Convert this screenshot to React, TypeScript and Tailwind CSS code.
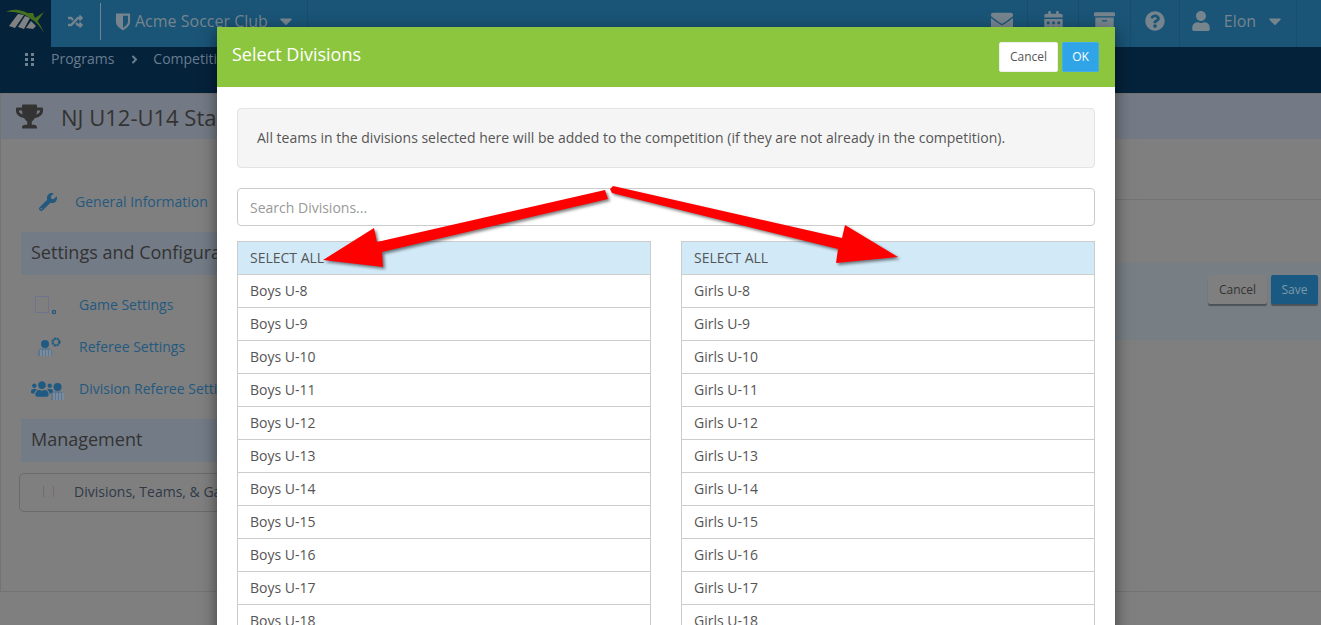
import {
  FaArchive,
  FaAngleRight,
  FaCalendarAlt,
  FaCaretDown,
  FaEnvelope,
  FaQuestionCircle,
  FaRandom,
  FaTrophy,
  FaUser,
  FaUsers,
  FaWrench,
} from "react-icons/fa";

const ages = ["U-8", "U-9", "U-10", "U-11", "U-12", "U-13", "U-14", "U-15", "U-16", "U-17", "U-18"];

function Logo() {
  return (
    <svg viewBox="0 0 51 47" className="h-[47px] w-[51px]">
      <path d="M6 12 C18 5 38 14 44 33 C37 20 22 10 6 12 Z" fill="#44701f" />
      <polygon points="9,26 18,14 24,15 15,28" fill="#808182" />
      <polygon points="18,27 25,16 30,18 24,29" fill="#808182" />
      <polygon points="26,28 31,21 36,26 33,29" fill="#808182" />
      <polygon points="28,13 33,13 35,18 44,12 37,22 31,19" fill="#44701f" />
    </svg>
  );
}

function ShieldIcon() {
  return (
    <svg viewBox="0 0 17 20" className="h-[19px] w-4">
      <path d="M1 1.5 H16 V10 C16 15 12 17 8.5 19.5 C5 17 1 15 1 10 Z" fill="#76848e" />
      <path d="M8.5 4 H13.8 V10 C13.8 13 11 15 8.5 16.8 Z" fill="#1a5476" />
    </svg>
  );
}

function GridDots() {
  return (
    <div className="grid grid-cols-2 gap-x-[3px] gap-y-[2px]">
      {[0, 1, 2, 3, 4, 5].map((i) => (
        <span key={i} className="h-[3px] w-[3px] bg-[#71828f]" />
      ))}
    </div>
  );
}

function GameIcon() {
  return (
    <svg viewBox="0 0 24 20" className="h-5 w-6">
      <rect x="1.5" y="1.5" width="13" height="16" fill="none" stroke="#6f7390" strokeWidth="1" />
      <circle cx="20" cy="17" r="1.6" fill="none" stroke="#24597f" strokeWidth="1.4" />
    </svg>
  );
}

function RefereeIcon() {
  return (
    <svg viewBox="0 0 26 20" className="h-5 w-[26px]">
      <circle cx="9" cy="7" r="4" fill="#1f5a82" />
      <path d="M2 19 V15 C2 12 5 11 9 11 C13 11 16 12 16 15 V19 Z" fill="#5d7690" />
      <path d="M5 13 V19 M8 13 V19 M11 13 V19 M14 13 V19" stroke="#a8aeb4" strokeWidth="0.8" />
      <circle cx="20" cy="5" r="3.4" fill="none" stroke="#1f5a82" strokeWidth="2.4" strokeDasharray="2 0.7" />
    </svg>
  );
}

function DivisionRefereeIcon() {
  return (
    <div className="flex items-end">
      <FaUsers className="text-[22px] text-[#1f5a82]" />
      <svg viewBox="0 0 13 18" className="-ml-[2px] h-[18px] w-[13px]">
        <circle cx="6.5" cy="5" r="4" fill="#1f5a82" />
        <path d="M0 18 V13 C0 10 3 9 6.5 9 C10 9 13 10 13 13 V18 Z" fill="#5d7690" />
        <path d="M3 11 V18 M6 11 V18 M9 11 V18 M12 11 V18" stroke="#a8aeb4" strokeWidth="0.8" />
      </svg>
    </div>
  );
}

function TopCell({ children, width }: { children: React.ReactNode; width: string }) {
  return <div className={`flex h-full items-center justify-center border-r border-[#184c6c] pb-[5px] ${width}`}>{children}</div>;
}

function DivisionList({ group }: { group: string }) {
  return (
    <div className="border-x border-t border-[#ccc]">
      <div className="flex h-[33px] items-center border-b border-[#ccc] bg-[#d2e9f7] px-3 text-[#555]">SELECT ALL</div>
      {ages.map((age) => (
        <div key={age} className="flex h-[33px] items-center border-b border-[#ccc] px-3 text-[#555]">
          {group} {age}
        </div>
      ))}
    </div>
  );
}

export default function App() {
  return (
    <div className="relative h-[625px] overflow-hidden bg-[#7f7f7f] font-['Open_Sans',sans-serif] text-sm">
      {/* top bar */}
      <div className="flex h-[47px] bg-[#1a5476] text-[#76848e]">
        <div className="w-[51px] shrink-0 bg-[#05223b]">
          <Logo />
        </div>
        <div className="flex h-full w-[257px] items-center border-r border-[#184c6c] pb-[5px]">
          <div className="flex w-[49px] justify-center">
            <FaRandom className="text-[15px]" />
          </div>
          <div className="h-[37px] w-px bg-[#6e8593]" />
          <div className="ml-[14px]">
            <ShieldIcon />
          </div>
          <span className="ml-[4px] text-base">Acme Soccer Club</span>
          <FaCaretDown className="ml-[8px] text-[20px]" />
        </div>
        <div className="flex-1" />
        <div className="flex h-full pr-6">
          <TopCell width="w-[52px]">
            <FaEnvelope className="text-[22px]" />
          </TopCell>
          <TopCell width="w-[51px]">
            <FaCalendarAlt className="text-[21px]" />
          </TopCell>
          <TopCell width="w-[52px]">
            <FaArchive className="text-[21px]" />
          </TopCell>
          <TopCell width="w-[49px]">
            <FaQuestionCircle className="text-[20px]" />
          </TopCell>
          <TopCell width="w-[117px]">
            <FaUser className="text-[20px]" />
            <span className="ml-[13px] text-base">Elon</span>
            <FaCaretDown className="ml-[9px] text-[20px]" />
          </TopCell>
        </div>
      </div>

      {/* breadcrumb */}
      <div className="flex h-[46px] items-start bg-[#05223b] pl-[25px] pt-[2px] text-[#687d8f]">
        <div className="mt-[4px]">
          <GridDots />
        </div>
        <span className="ml-[17px]">Programs</span>
        <FaAngleRight className="ml-[14px] mt-[4px] text-[13px]" />
        <span className="ml-[12px]">Competitions</span>
      </div>

      {/* page title */}
      <div className="flex h-[46px] items-center border-l border-t border-[#737373] bg-[#747a85] pl-[15px] text-[#333]">
        <FaTrophy className="text-[27px]" />
        <span className="ml-[18px] mt-[2px] text-[22px]">NJ U12-U14 State Cup</span>
      </div>

      {/* page content */}
      <div className="flex h-[453px] border-b border-l border-[#737373]">
        <div className="w-[400px] shrink-0 pl-[18px] pt-[48px]">
          <div className="flex h-[30px] items-center pl-[20px] text-[#24597f]">
            <FaWrench className="text-[18px]" />
            <span className="ml-[18px]">General Information</span>
          </div>
          <div className="ml-[2px] mt-[15px] flex h-[43px] items-center bg-[#737b86] pb-[3px] pl-[10px] text-lg text-[#333]">
            Settings and Configuration
          </div>
          <div className="mt-[9px] flex h-[42px] items-center text-[#24597f]">
            <div className="flex w-[60px] justify-end pr-[21px]">
              <GameIcon />
            </div>
            <span>Game Settings</span>
          </div>
          <div className="flex h-[42px] items-center text-[#24597f]">
            <div className="flex w-[60px] justify-end pr-[17px]">
              <RefereeIcon />
            </div>
            <span>Referee Settings</span>
          </div>
          <div className="flex h-[42px] items-center text-[#24597f]">
            <div className="flex w-[60px] justify-end pr-[15px]">
              <DivisionRefereeIcon />
            </div>
            <span>Division Referee Settings</span>
          </div>
          <div className="ml-[2px] mt-[9px] flex h-[43px] items-center bg-[#737b86] pb-[4px] pl-[10px] text-lg text-[#333]">
            Management
          </div>
          <div className="mt-[11px] flex h-[39px] items-center rounded-[5px] border border-[#6b6b6b] pb-[2px] pl-[23px] text-[#2e3a48]">
            <span className="h-[11px] w-px bg-[#6d6d6d]" />
            <span className="ml-[9px] h-[11px] w-px bg-[#7d6a6a]" />
            <span className="ml-[20px]">Divisions, Teams, &amp; Games</span>
          </div>
        </div>
        <div className="flex-1">
          <div className="h-[61px] border-b border-[#737373]" />
          <div className="mt-[63px] flex h-[77px] items-start justify-end bg-[#777f84] pr-[3px] pt-[12px] text-xs">
            <button className="h-[29px] w-[59px] rounded-[2px] bg-[#7f7f7f] text-[#333] shadow-[0_2px_1px_rgba(0,0,0,0.35)]">
              Cancel
            </button>
            <button className="ml-[4px] h-[29px] w-[47px] rounded-[2px] bg-[#1a5a82] text-[#7d98a8] shadow-[0_2px_1px_rgba(0,0,0,0.35)]">
              Save
            </button>
          </div>
        </div>
      </div>

      {/* modal */}
      <div className="absolute left-[217px] top-[27px] w-[898px] bg-white shadow-[0_5px_15px_rgba(0,0,0,0.5)]">
        <div className="flex h-[60px] items-center justify-between bg-[#8cc63f] pl-[15px] pr-[16px]">
          <h2 className="pb-[6px] text-lg font-medium text-white">Select Divisions</h2>
          <div className="flex gap-1">
            <button className="h-[30px] w-[59px] rounded-[2px] border border-[#eee] bg-white text-xs text-[#555]">
              Cancel
            </button>
            <button className="h-[30px] w-[37px] rounded-[2px] border border-[#44ace9] bg-[#2fa4e7] text-xs text-white">
              OK
            </button>
          </div>
        </div>
        <div className="px-5 pt-[21px]">
          <div className="flex h-[60px] items-center rounded border border-[#e3e3e3] bg-[#f5f5f5] px-[19px] text-[#555]">
            All teams in the divisions selected here will be added to the competition (if they are not already in the
            competition).
          </div>
          <input
            placeholder="Search Divisions..."
            className="mt-5 h-[38px] w-full rounded border border-[#ccc] px-3 text-[#555] placeholder:text-[#999]"
          />
          <div className="mt-[15px] grid grid-cols-2 gap-[30px]">
            <DivisionList group="Boys" />
            <DivisionList group="Girls" />
          </div>
        </div>
      </div>

      {/* annotation arrows */}
      <svg
        viewBox="0 0 1321 625"
        className="pointer-events-none absolute inset-0 h-[625px] w-[1321px] drop-shadow-[2px_2px_1.5px_rgba(0,0,0,0.5)]"
      >
        <polygon points="605,190 377,242 374,228 323,260 383,267 382,252 608,199" fill="#ff0000" />
        <polygon points="613,186 842,238 845,225 898,257 836,263 838,249 612,193 610,189" fill="#ff0000" />
      </svg>
    </div>
  );
}
